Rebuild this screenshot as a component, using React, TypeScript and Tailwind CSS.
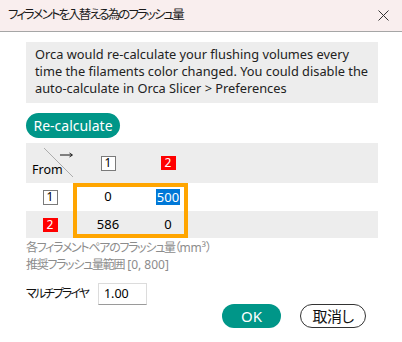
import React from "react";

const F = "font-['Noto_Sans','Noto_Sans_CJK_JP',sans-serif] [font-feature-settings:'palt']";

function NumBox({ n, red }: { n: string; red?: boolean }) {
  return red ? (
    <span className="flex h-[14px] w-[15px] items-center justify-center bg-[#ff0000] text-[12px] leading-none text-white">{n}</span>
  ) : (
    <span className="flex h-[15px] w-[15px] items-center justify-center border border-[#7a7a7a] bg-white text-[12px] leading-none text-black">{n}</span>
  );
}

export default function App() {
  return (
    <div className={`${F} h-[342px] w-[402px] bg-white text-black`}>
      <div className="flex h-[32px] items-center justify-between border-b border-[#a6a6a6] bg-[#f9eeee] pl-[8px] pr-[12px]">
        <span className="text-[12.5px] tracking-[-1.9px] text-[#1a1a1a]">フィラメントを入替える為のフラッシュ量</span>
        <svg width="11" height="11" viewBox="0 0 11 11" className="mr-[1px]">
          <path d="M0.5 0.5 L10.5 10.5 M10.5 0.5 L0.5 10.5" stroke="#333" strokeWidth="1" />
        </svg>
      </div>
      <div className="flex flex-col pl-[26px] pr-[24px]">
        <div className="mt-[10px] flex h-[61px] flex-col bg-[#ededed] pl-[9px] pt-[4px] text-[12.8px] leading-[17px] text-[#222]">
          <span className="whitespace-nowrap">Orca would re-calculate your flushing volumes every</span>
          <span className="whitespace-nowrap">time the filaments color changed. You could disable the</span>
          <span className="whitespace-nowrap">auto-calculate in Orca Slicer &gt; Preferences</span>
        </div>
        <div className="mt-[10px] flex">
          <button className="flex h-[25px] w-[94px] items-center justify-center rounded-full bg-[#009688] text-[14px] text-white">Re-calculate</button>
        </div>
        <div className="relative mt-[5px]">
          <div className="grid h-[40px] grid-cols-[47px_70px_50px] items-center bg-[#ededed]">
            <div className="relative h-full">
              <svg className="absolute left-0 top-0" width="47" height="40" viewBox="0 0 47 40">
                <line x1="18" y1="5" x2="47" y2="34" stroke="#9a9a9a" strokeWidth="0.8" />
                <line x1="34" y1="12" x2="46" y2="12" stroke="#111" strokeWidth="1" />
                <path d="M43.5 10 L46.5 12 L43.5 14" fill="none" stroke="#111" strokeWidth="0.9" />
              </svg>
              <span className="absolute left-[6px] top-[19px] text-[12.5px] leading-[16px]">From</span>
            </div>
            <div className="flex justify-center">
              <NumBox n="1" />
            </div>
            <div className="flex justify-center">
              <NumBox n="2" red />
            </div>
          </div>
          <div className="grid h-[28px] grid-cols-[47px_70px_50px] items-center bg-white text-[13px]">
            <div className="flex justify-center pl-[1px]">
              <NumBox n="1" />
            </div>
            <div className="text-center">0</div>
            <div className="flex justify-center">
              <span className="bg-[#0078d7] px-[1px] leading-[16px] text-white">500</span>
            </div>
          </div>
          <div className="grid h-[27px] grid-cols-[47px_70px_50px] items-center bg-[#ededed] text-[13px]">
            <div className="flex justify-center pl-[1px]">
              <NumBox n="2" red />
            </div>
            <div className="text-center">586</div>
            <div className="text-center">0</div>
          </div>
          <div className="pointer-events-none absolute left-[47px] top-[40px] h-[55px] w-[115px] border-[4px] border-[#ffa500]" />
        </div>
        <div className="mt-[1px] flex flex-col text-[12px] leading-[17px] text-[#8c8c8c]">
          <div>
            <span className="tracking-[-1.3px]">各フィラメントペアのフラッシュ量（</span>mm³<span className="tracking-[-1.3px]">）</span>
          </div>
          <div>
            <span className="tracking-[-1.3px]">推奨フラッシュ量範囲</span> [0, 800]
          </div>
        </div>
        <div className="mt-[10px] flex items-center">
          <span className="text-[12px] tracking-[-2px] text-[#111]">マルチプライヤ</span>
          <div className="ml-[10px] flex h-[22px] w-[49px] items-center border border-[#dcdcdc] border-b-[#9a9a9a] pl-[5px] text-[12.5px]">1.00</div>
        </div>
        <div className="-mt-[1px] flex justify-end gap-[19px] pr-[12px]">
          <button className="flex h-[24px] w-[59px] items-center justify-center rounded-full bg-[#009688] text-[15px] text-white">OK</button>
          <button className="flex h-[24px] w-[66px] items-center justify-center rounded-full border border-[#333] bg-white text-[15px] tracking-[-0.5px] text-[#111]">取消し</button>
        </div>
      </div>
    </div>
  );
}
